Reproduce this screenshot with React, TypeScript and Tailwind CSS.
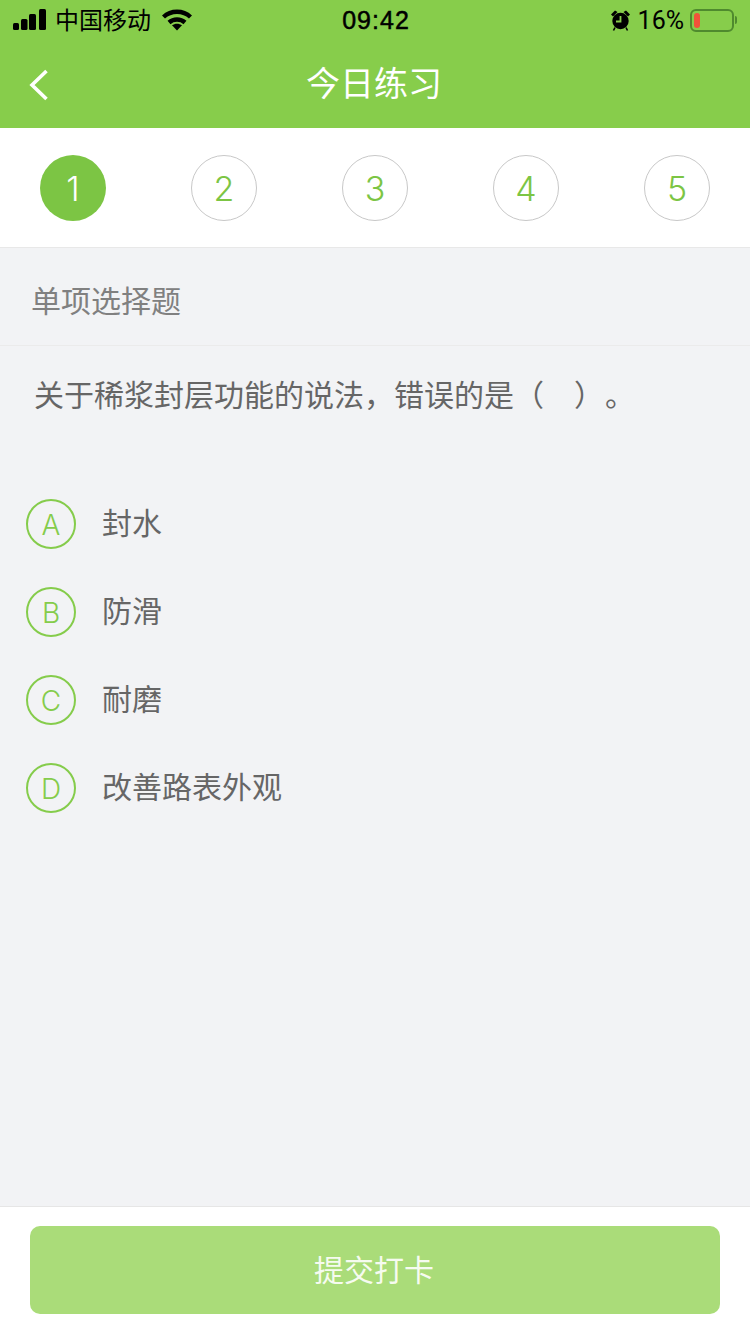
import React from "react";

const font = { fontFamily: '"Liberation Sans","Noto Sans CJK SC",sans-serif' };
const latin = { fontFamily: 'Inter,"Liberation Sans",sans-serif' };
const roboto = { fontFamily: 'Roboto,"Liberation Sans",sans-serif' };

function Circle({ n, active }: { n: number; active?: boolean }) {
  return (
    <div
      style={latin}
      className={
        active
          ? "w-[66px] h-[66px] rounded-full bg-[#7cc544] text-white flex items-center justify-center text-[34px] font-light"
          : "w-[66px] h-[66px] rounded-full border border-[#c8c8c8] text-[#7cc544] flex items-center justify-center text-[34px] font-light"
      }
    >
      {n}
    </div>
  );
}

function Option({ l, t }: { l: string; t: string }) {
  return (
    <div className="h-[88px] flex items-center pl-[26px]">
      <div
        style={latin}
        className="w-[50px] h-[50px] rounded-full border-2 border-[#85cc4b] text-[#85cc4b] flex items-center justify-center pt-[1px] text-[28px] font-light"
      >
        {l}
      </div>
      <div className="ml-[26px] text-[30px] text-[#666666] leading-none">{t}</div>
    </div>
  );
}

export default function App() {
  return (
    <div className="w-[750px] h-[1334px] flex flex-col bg-[#f2f3f5] overflow-hidden" style={font}>
      <div className="h-[128px] bg-[#87cd4b] flex flex-col shrink-0">
        <div className="h-[40px] grid grid-cols-[1fr_auto_1fr] items-center pl-[13px] pr-[13px] text-black">
          <div className="flex items-center">
            <svg width="34" height="22" viewBox="0 0 34 22" fill="#000">
              <rect x="0" y="14" width="6" height="7" rx="1.5" />
              <rect x="8" y="10" width="6.5" height="11" rx="1.5" />
              <rect x="16" y="5" width="7" height="16" rx="1.5" />
              <rect x="26" y="0" width="7" height="21" rx="1.5" />
            </svg>
            <span className="ml-[8px] pt-[2px] text-[24px] leading-none">中国移动</span>
            <svg className="ml-[11px]" width="30" height="22" viewBox="0 0 30 22" fill="none" stroke="#000" strokeWidth="4.4">
              <path d="M1.5 8C9 1 21 1 28.5 8" />
              <path d="M7 13.5C11.5 9.5 18.5 9.5 23 13.5" />
              <path d="M15 21.5L10 16.3C12.8 14.2 17.2 14.2 20 16.3Z" fill="#000" stroke="none" />
            </svg>
          </div>
          <div className="pl-[2px] text-[25px] leading-none tracking-[1px] [-webkit-text-stroke:0.5px_#000]">09:42</div>
          <div className="flex items-center justify-self-end">
            <svg width="21" height="22" viewBox="0 0 21 22">
              <circle cx="10.5" cy="12" r="8.2" fill="#000" />
              <path d="M10.5 7V12.5H6" stroke="#87cd4b" strokeWidth="1.8" fill="none" />
              <path d="M1 5.5L5 1.5L7.5 3L3 7.5ZM20 5.5L16 1.5L13.5 3L18 7.5Z" fill="#000" />
              <path d="M5 18.5L3.5 21.5M16 18.5L17.5 21.5" stroke="#000" strokeWidth="1.6" />
            </svg>
            <span style={roboto} className="ml-[7px] text-[25px] leading-none">16%</span>
            <div className="ml-[6px] w-[44px] h-[23px] rounded-[6px] border-2 border-[#4f8a2e] pl-[2px] pt-[2px]">
              <div className="w-[6px] h-[15px] rounded-[3px] bg-[#f0533a]" />
            </div>
            <div className="ml-[1px] w-[2px] h-[8px] rounded-r bg-[#4f8a2e]" />
          </div>
        </div>
        <div className="h-[88px] grid grid-cols-[1fr_auto_1fr] items-center">
          <svg className="ml-[28px] mt-[1px]" width="22" height="34" viewBox="0 0 22 34" fill="none" stroke="#fff" strokeWidth="3.6">
            <path d="M18.5 3L4 17L18.5 31" />
          </svg>
          <span className="text-white text-[34px] leading-none pr-[2px]">今日练习</span>
          <span />
        </div>
      </div>

      <div className="h-[120px] bg-white border-b border-[#e8e8e8] flex items-center justify-between px-[40px] pt-[1px] shrink-0">
        <Circle n={1} active />
        <Circle n={2} />
        <Circle n={3} />
        <Circle n={4} />
        <Circle n={5} />
      </div>

      <div className="h-[98px] border-b border-[#ebebeb] pl-[31px] pt-[9px] flex items-center text-[30px] text-[#808080] shrink-0">
        单项选择题
      </div>

      <div className="pl-[34px] pt-[33px] h-[110px] text-[30px] leading-[34px] text-[#666666] shrink-0 whitespace-pre">
        关于稀浆封层功能的说法，错误的是（<span className="ml-[30px]">）</span><span className="ml-[16px]">。</span>
      </div>

      <div className="pt-[24px] flex-1">
        <Option l="A" t="封水" />
        <Option l="B" t="防滑" />
        <Option l="C" t="耐磨" />
        <Option l="D" t="改善路表外观" />
      </div>

      <div className="h-[128px] bg-white border-t border-[#e6e6e6] pt-[19px] px-[30px] shrink-0">
        <div className="h-[88px] rounded-[10px] bg-[#aadc79] text-[#f6fbf0] text-[30px] flex items-center justify-center pr-[2px]">
          提交打卡
        </div>
      </div>
    </div>
  );
}
